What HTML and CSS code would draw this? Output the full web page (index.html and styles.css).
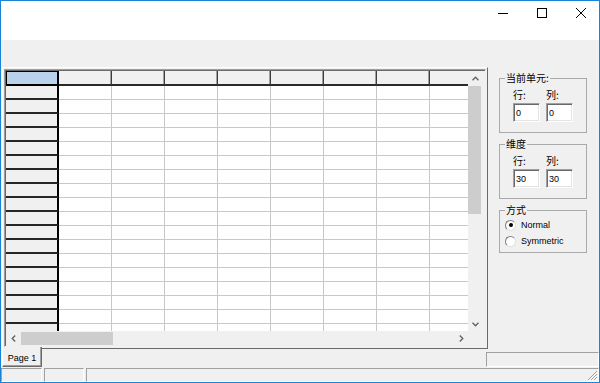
FILE: index.html
```html
<!DOCTYPE html>
<html lang="zh-CN">
<head>
<meta charset="utf-8">
<title>Grid</title>
<link rel="stylesheet" href="styles.css">
</head>
<body>
<div class="window">
  <div class="titlebar">
    <div class="tb-btn"><svg width="10" height="10" viewBox="0 0 10 10"><path d="M0 5.5H10" stroke="#000" stroke-width="1"/></svg></div>
    <div class="tb-btn"><svg width="10" height="10" viewBox="0 0 10 10"><rect x="0.5" y="0.5" width="9" height="9" fill="none" stroke="#000" stroke-width="1"/></svg></div>
    <div class="tb-btn"><svg width="10" height="10" viewBox="0 0 10 10"><path d="M0 0L10 10M10 0L0 10" stroke="#000" stroke-width="1"/></svg></div>
  </div>
  <div class="client">
    <div class="workarea">
      <div class="tabctl">
        <div class="grid">
          <div class="grid-top">
            <div class="cells">
              <table class="sheet">
                <colgroup><col><col><col><col><col><col><col><col><col></colgroup>
                <tr class="hdr"><th class="corner"></th><th class="colh"></th><th class="colh"></th><th class="colh"></th><th class="colh"></th><th class="colh"></th><th class="colh"></th><th class="colh"></th><th class="colh"></th></tr>
                <tr><th class="rowh"></th><td></td><td></td><td></td><td></td><td></td><td></td><td></td><td></td></tr>
                <tr><th class="rowh"></th><td></td><td></td><td></td><td></td><td></td><td></td><td></td><td></td></tr>
                <tr><th class="rowh"></th><td></td><td></td><td></td><td></td><td></td><td></td><td></td><td></td></tr>
                <tr><th class="rowh"></th><td></td><td></td><td></td><td></td><td></td><td></td><td></td><td></td></tr>
                <tr><th class="rowh"></th><td></td><td></td><td></td><td></td><td></td><td></td><td></td><td></td></tr>
                <tr><th class="rowh"></th><td></td><td></td><td></td><td></td><td></td><td></td><td></td><td></td></tr>
                <tr><th class="rowh"></th><td></td><td></td><td></td><td></td><td></td><td></td><td></td><td></td></tr>
                <tr><th class="rowh"></th><td></td><td></td><td></td><td></td><td></td><td></td><td></td><td></td></tr>
                <tr><th class="rowh"></th><td></td><td></td><td></td><td></td><td></td><td></td><td></td><td></td></tr>
                <tr><th class="rowh"></th><td></td><td></td><td></td><td></td><td></td><td></td><td></td><td></td></tr>
                <tr><th class="rowh"></th><td></td><td></td><td></td><td></td><td></td><td></td><td></td><td></td></tr>
                <tr><th class="rowh"></th><td></td><td></td><td></td><td></td><td></td><td></td><td></td><td></td></tr>
                <tr><th class="rowh"></th><td></td><td></td><td></td><td></td><td></td><td></td><td></td><td></td></tr>
                <tr><th class="rowh"></th><td></td><td></td><td></td><td></td><td></td><td></td><td></td><td></td></tr>
                <tr><th class="rowh"></th><td></td><td></td><td></td><td></td><td></td><td></td><td></td><td></td></tr>
                <tr><th class="rowh"></th><td></td><td></td><td></td><td></td><td></td><td></td><td></td><td></td></tr>
                <tr><th class="rowh"></th><td></td><td></td><td></td><td></td><td></td><td></td><td></td><td></td></tr>
                <tr><th class="rowh"></th><td></td><td></td><td></td><td></td><td></td><td></td><td></td><td></td></tr>
              </table>
            </div>
            <div class="vscroll">
              <div class="sb-arrow"><svg width="7" height="5" viewBox="0 0 7 5"><path d="M0.5 4.2L3.5 1.2L6.5 4.2" fill="none" stroke="#606060" stroke-width="1.3"/></svg></div>
              <div class="vtrack"><div class="vthumb"></div></div>
              <div class="sb-arrow"><svg width="7" height="5" viewBox="0 0 7 5"><path d="M0.5 0.8L3.5 3.8L6.5 0.8" fill="none" stroke="#606060" stroke-width="1.3"/></svg></div>
            </div>
          </div>
          <div class="grid-bottom">
            <div class="hscroll">
              <div class="sb-arrow"><svg width="5" height="7" viewBox="0 0 5 7"><path d="M4.2 0.5L1.2 3.5L4.2 6.5" fill="none" stroke="#606060" stroke-width="1.3"/></svg></div>
              <div class="htrack"><div class="hthumb"></div></div>
              <div class="sb-arrow"><svg width="5" height="7" viewBox="0 0 5 7"><path d="M0.8 0.5L3.8 3.5L0.8 6.5" fill="none" stroke="#606060" stroke-width="1.3"/></svg></div>
            </div>
            <div class="sizebox"></div>
          </div>
        </div>
      </div>
      <div class="panel">
        <fieldset class="group">
          <legend>当前单元:</legend>
          <div class="pair">
            <label class="field"><span class="lbl">行:</span><input class="num" type="text" value="0"></label>
            <label class="field"><span class="lbl">列:</span><input class="num" type="text" value="0"></label>
          </div>
        </fieldset>
        <fieldset class="group">
          <legend>维度</legend>
          <div class="pair">
            <label class="field"><span class="lbl">行:</span><input class="num" type="text" value="30"></label>
            <label class="field"><span class="lbl">列:</span><input class="num" type="text" value="30"></label>
          </div>
        </fieldset>
        <fieldset class="group group-mode">
          <legend>方式</legend>
          <div class="opts">
            <div class="opt"><span class="radio checked"></span><span>Normal</span></div>
            <div class="opt"><span class="radio"></span><span>Symmetric</span></div>
          </div>
        </fieldset>
      </div>
    </div>
    <div class="tabrow">
      <div class="tab">Page 1</div>
      <div class="statusbox"></div>
    </div>
    <div class="statusbar">
      <div class="pane p1"></div>
      <div class="pane p2"></div>
      <div class="pane p3">
        <svg class="grip" width="11" height="11" viewBox="0 0 11 11">
          <path d="M10 1L1 10M10 4L4 10M10 7L7 10" stroke="#a0a0a0" stroke-width="1"/>
          <path d="M11 2L2 11M11 5L5 11M11 8L8 11" stroke="#fff" stroke-width="1"/>
        </svg>
      </div>
    </div>
  </div>
</div>
</body>
</html>
```
FILE: styles.css
```css
* { box-sizing: border-box; }
html, body { margin: 0; padding: 0; }
body {
  width: 600px;
  height: 383px;
  overflow: hidden;
  background: #fff;
  font-family: "Liberation Sans", Arial, sans-serif;
  font-size: 9px;
  color: #000;
}
.window {
  width: 600px;
  height: 383px;
  border: 1px solid #1883d7;
  display: flex;
  flex-direction: column;
}
.titlebar {
  flex: none;
  height: 39px;
  background: #fff;
  display: flex;
  justify-content: flex-end;
}
.tb-btn {
  width: 39px;
  height: 27px;
  display: flex;
  justify-content: flex-end;
  align-items: flex-start;
  padding: 7px 13px 0 0;
}
.tb-btn svg { display: block; }
.client {
  flex: 1;
  min-height: 0;
  background: #f0f0f0;
  display: flex;
  flex-direction: column;
}
.workarea {
  flex: none;
  display: flex;
  padding: 27px 0 0 1px;
}
.tabctl {
  width: 486px;
  height: 282px;
  border: 1px solid;
  border-color: #fff #696969 #696969 #fff;
  padding: 1px;
}
.grid {
  height: 100%;
  border: 1px solid;
  border-color: #a0a0a0 #f0f0f0 #f0f0f0 #a0a0a0;
  box-shadow: inset 1px 1px 0 #696969;
  padding: 1px;
  display: flex;
  flex-direction: column;
}
.grid-top {
  height: 260px;
  display: flex;
}
.cells {
  width: 462px;
  height: 260px;
  overflow: hidden;
  background: #fff;
}
.sheet {
  width: 477px;
  table-layout: fixed;
  border-collapse: separate;
  border-spacing: 0;
  font-size: 0;
  line-height: 0;
}
.sheet col { width: 53px; }
.sheet tr { height: 14px; }
.sheet tr.hdr { height: 15px; }
.sheet th, .sheet td { padding: 0; }
.sheet td {
  background: #fff;
  border-right: 1px solid #c8c8c8;
  border-bottom: 1px solid #c8c8c8;
}
.corner {
  background: #b9d1ea;
  border-right: 2px solid #000;
  border-bottom: 2px solid #000;
  box-shadow: inset 1px 1px 0 #000;
}
.colh {
  background: #f0f0f0;
  border-right: 1px solid #3c3c3c;
  border-bottom: 2px solid #2a2a2a;
  box-shadow: inset -1px 0 0 #a0a0a0;
}
.rowh {
  background: #f0f0f0;
  border-right: 2px solid #000;
  border-bottom: 2px solid #262626;
}
.vscroll {
  width: 14px;
  display: flex;
  flex-direction: column;
  background: #f0f0f0;
}
.sb-arrow {
  width: 14px;
  height: 14px;
  flex: none;
  display: flex;
  align-items: center;
  justify-content: center;
}
.sb-arrow svg { display: block; }
.vtrack { flex: 1; }
.vthumb {
  width: 13px;
  height: 128px;
  margin-top: 1px;
  background: #cdcdcd;
}
.grid-bottom {
  height: 14px;
  display: flex;
}
.hscroll {
  width: 462px;
  display: flex;
  background: #f0f0f0;
}
.htrack { flex: 1; }
.hthumb {
  width: 92px;
  height: 13px;
  margin: 1px 0 0 1px;
  background: #cdcdcd;
}
.sizebox {
  width: 14px;
  background: #f0f0f0;
}
.panel {
  display: flex;
  flex-direction: column;
  gap: 5px;
  margin: 5px 0 0 11px;
}
.group {
  width: 88px;
  height: 61px;
  margin: 0;
  padding: 0 5px;
  border: 1px solid #a9a9a9;
  min-width: 0;
}
.group legend {
  padding: 0 1px;
  font-family: "Noto Sans CJK SC", "Liberation Sans", sans-serif;
  font-size: 10px;
  line-height: 12px;
  height: 12px;
}
.group-mode { height: 49px; }
.pair {
  display: flex;
  gap: 6px;
  margin: 5px 0 0 8px;
}
.field {
  display: flex;
  flex-direction: column;
  gap: 2px;
}
.lbl {
  font-family: "Noto Sans CJK SC", "Liberation Sans", sans-serif;
  font-size: 10px;
  line-height: 12px;
  height: 12px;
}
.num {
  width: 27px;
  height: 19px;
  margin: 0;
  padding: 0 0 0 2px;
  border: 1px solid;
  border-color: #a0a0a0 #fff #fff #a0a0a0;
  box-shadow: inset 1px 1px 0 #696969, inset -1px -1px 0 #e3e3e3;
  background: #fff;
  font-family: "Liberation Sans", Arial, sans-serif;
  font-size: 9px;
  color: #000;
  outline: none;
}
.opts { padding-top: 1px; }
.opt {
  height: 16px;
  display: flex;
  align-items: center;
  gap: 5px;
  font-size: 9px;
}
.radio {
  width: 11px;
  height: 11px;
  border-radius: 50%;
  border: 1px solid;
  border-color: #808080 #e0e0e0 #e0e0e0 #808080;
  background: #fff;
  display: flex;
  align-items: center;
  justify-content: center;
}
.radio.checked::after {
  content: "";
  width: 4px;
  height: 4px;
  border-radius: 50%;
  background: #000;
}
.tabrow {
  flex: none;
  height: 18px;
  display: flex;
  padding-left: 1px;
}
.tab {
  width: 40px;
  height: 20px;
  margin-top: -2px;
  background: #f0f0f0;
  border-left: 1px solid #fff;
  border-right: 1px solid #696969;
  border-bottom: 1px solid #696969;
  box-shadow: inset -1px -1px 0 #a0a0a0;
  display: flex;
  align-items: center;
  justify-content: center;
  padding-top: 2px;
  font-size: 9px;
}
.statusbox {
  margin-left: auto;
  margin-top: 3px;
  width: 113px;
  height: 15px;
  border: 1px solid;
  border-color: #a0a0a0 #fff #fff #a0a0a0;
}
.statusbar {
  flex: none;
  height: 15px;
  display: flex;
  gap: 2px;
  padding-top: 1px;
}
.pane {
  height: 14px;
  border: 1px solid;
  border-color: #a0a0a0 #fff #fff #a0a0a0;
}
.p1 { width: 41px; }
.p2 { width: 40px; }
.p3 {
  flex: 1;
  display: flex;
  justify-content: flex-end;
  align-items: flex-end;
}
.grip { display: block; }
```
